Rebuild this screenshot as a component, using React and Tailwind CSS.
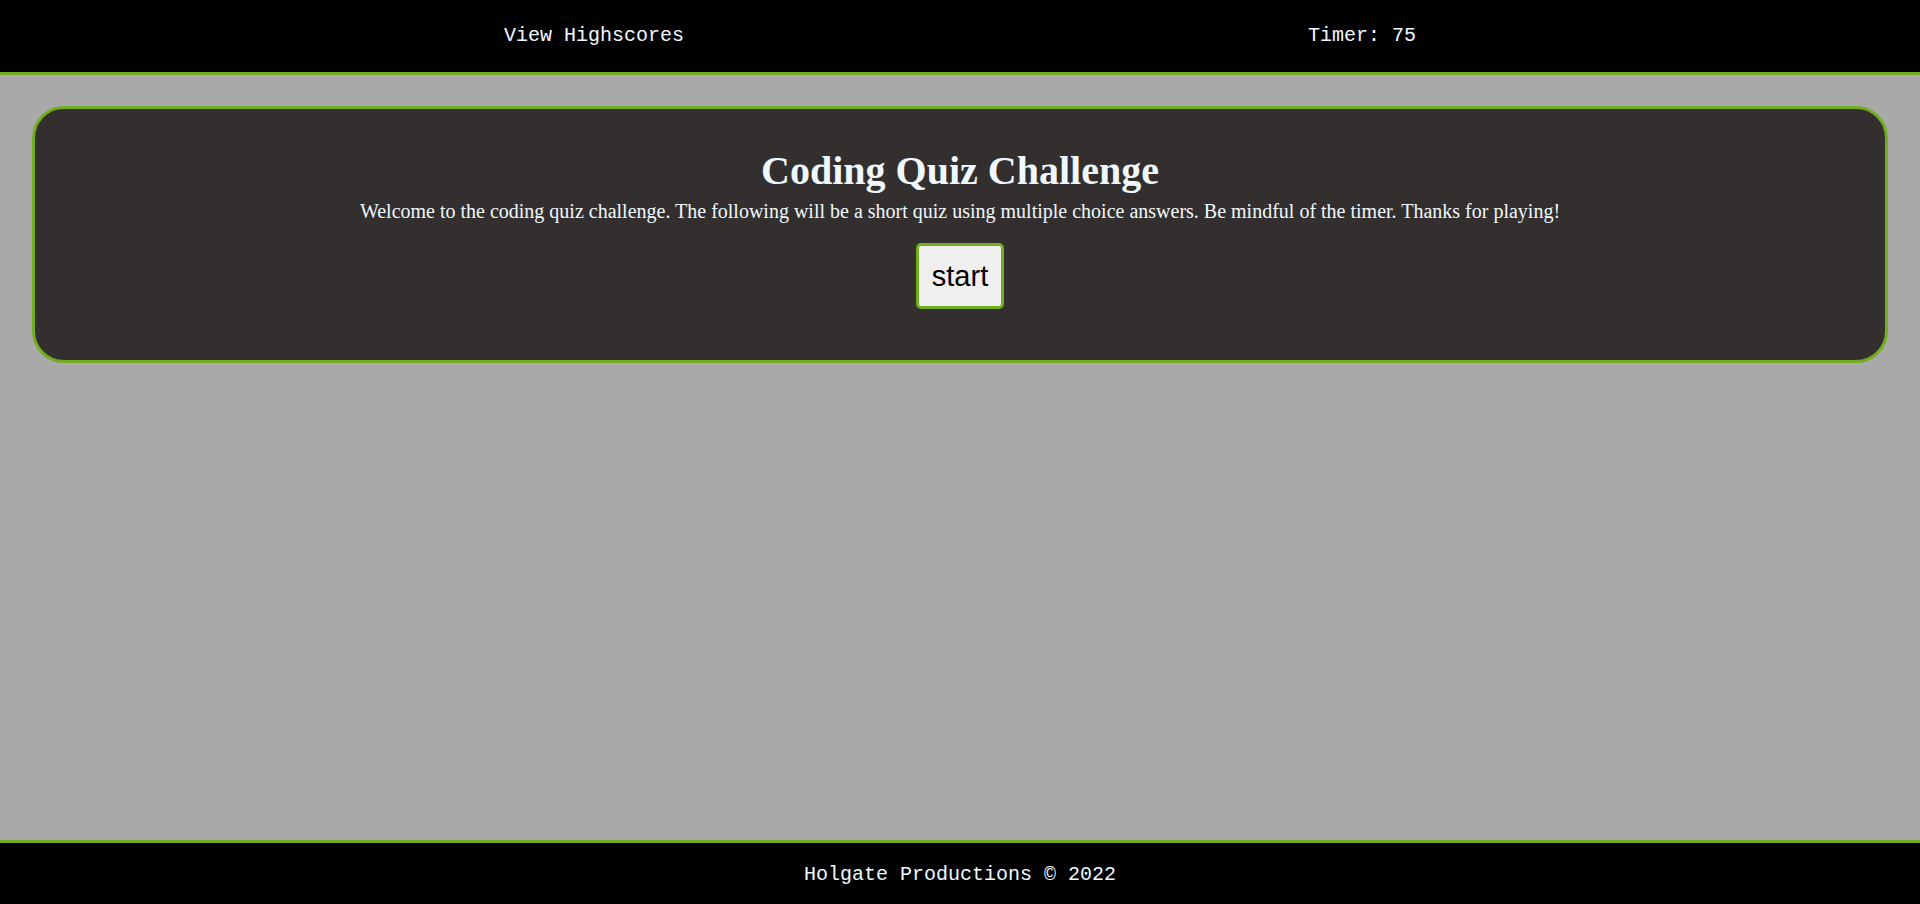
import React from 'react'

export default function App() {
  return (
    <div className="min-h-screen flex flex-col bg-[#a9a9a9]">
      <header className="h-[75px] bg-black border-b-[3px] border-[#72ad1e] flex items-center justify-between px-[504px] text-[20px] text-[#f0f8ff] font-['Liberation_Mono',monospace]">
        <a href="#" className="cursor-pointer">View Highscores</a>
        <span>Timer: 75</span>
      </header>

      <main className="flex-1 px-[32px] pt-[31px]">
        <section className="bg-[#332f2f] border-[3px] border-[#72ad1e] rounded-[32px] pt-[39px] pb-[51px] flex flex-col items-center text-[#f0f8ff] font-['Liberation_Serif',serif]">
          <h1 className="text-[40px] font-bold leading-[46px]">Coding Quiz Challenge</h1>
          <p className="mt-[6px] text-[20px] leading-[23px]">
            Welcome to the coding quiz challenge. The following will be a short quiz using multiple choice answers. Be mindful of the timer. Thanks for playing!
          </p>
          <button className="mt-[20px] bg-[#efefef] text-black border-[3px] border-[#72ad1e] rounded-[5px] px-[13px] py-[13px] text-[29px] leading-[34px] font-['Liberation_Sans',sans-serif]">
            start
          </button>
        </section>
      </main>

      <footer className="h-[64px] bg-black border-t-[3px] border-[#72ad1e] flex items-center justify-center pt-[2px] text-[20px] text-[#f0f8ff] font-['Liberation_Mono',monospace]">
        Holgate Productions © 2022
      </footer>
    </div>
  )
}
